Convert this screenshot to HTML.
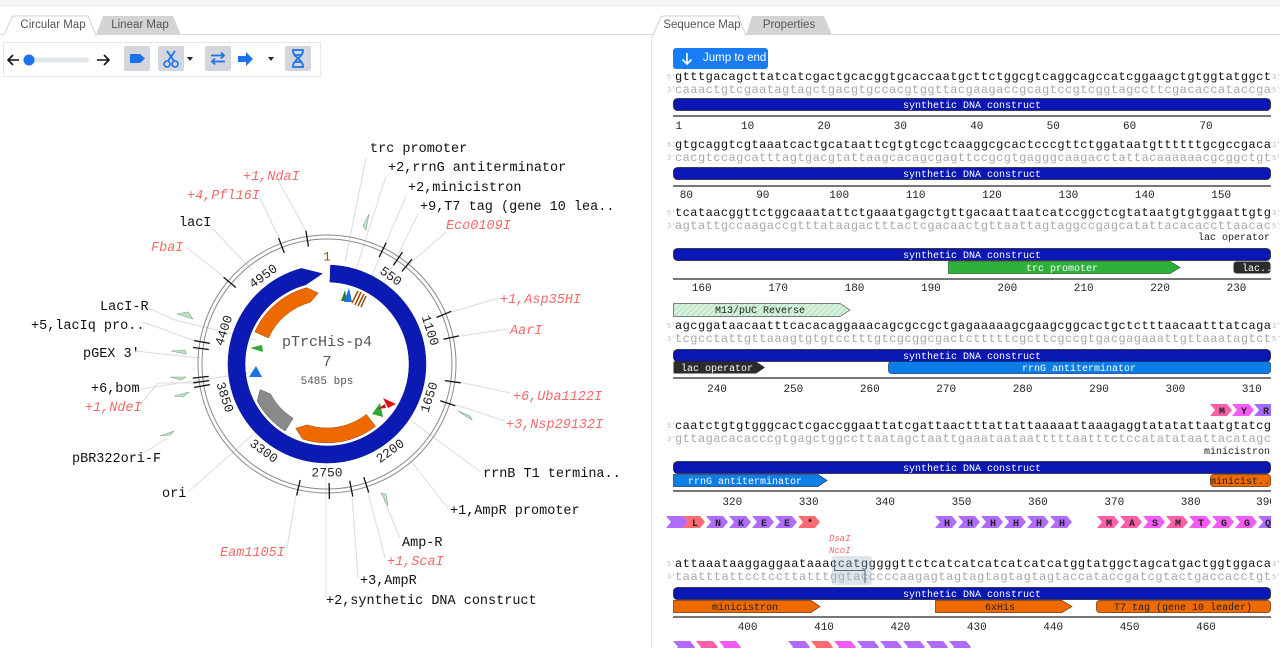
<!DOCTYPE html>
<html><head><meta charset="utf-8">
<style>
*{margin:0;padding:0;box-sizing:border-box}
body{width:1280px;height:648px;overflow:hidden;background:#fff;font-family:"Liberation Sans",sans-serif;position:relative}
.top{position:absolute;left:0;top:0;width:1280px;height:6px;background:#f4f5f7;border-bottom:1px solid #e9e9ec}
.tab{position:absolute;top:16px;height:19px;font-size:11.5px;line-height:18px;text-align:center;color:#555}
.btn{position:absolute;top:46px;width:26px;height:25px;background:#d3d6dc;border-radius:2px}
.caret{position:absolute;top:57px;width:0;height:0;border-left:3px solid transparent;border-right:3px solid transparent;border-top:4px solid #222}
svg text{font-family:"Liberation Mono",monospace}
</style></head><body>
<div class="top"></div>
<svg style="position:absolute;left:0;top:0" width="1280" height="648">
<!-- tab lines -->
<line x1="0" y1="34.5" x2="1280" y2="34.5" stroke="#d8dbe0"/>
<path d="M4 35 L12 17 Q13 16 15 16 L88 16 L96 35 Z" fill="#fff" stroke="#d0d3d8"/>
<path d="M96 35 L103 16 L173 16 L181 35 Z" fill="#d4d4d4"/>
<path d="M653 35 L661 17 Q662 16 664 16 L738 16 L746 35 Z" fill="#fff" stroke="#d0d3d8"/>
<path d="M746 35 L752 16 L824 16 L832 35 Z" fill="#d4d4d4"/>
<rect x="4" y="34" width="91" height="2" fill="#fff"/>
<rect x="654" y="34" width="91" height="2" fill="#fff"/>
<line x1="651.5" y1="35" x2="651.5" y2="648" stroke="#e3e5e8"/>
<rect x="3.5" y="42.5" width="317" height="34" fill="none" stroke="#e6e8eb"/>
</svg>
<div class="tab" style="left:14px;width:78px">Circular Map</div>
<div class="tab" style="left:104px;width:72px">Linear Map</div>
<div class="tab" style="left:662px;width:80px">Sequence Map</div>
<div class="tab" style="left:752px;width:74px">Properties</div>

<!-- toolbar -->
<svg style="position:absolute;left:0;top:42px" width="320" height="34">
<path d="M19 18 H9 M13 13 L8 18 L13 23" stroke="#111" stroke-width="1.6" fill="none"/>
<rect x="24" y="15.5" width="65" height="5" rx="2.5" fill="#e2e5ea"/>
<circle cx="29" cy="18" r="5.5" fill="#1a73e8"/>
<path d="M97 18 H109 M104 13 L109 18 L104 23" stroke="#111" stroke-width="1.6" fill="none"/>
</svg>
<div class="btn" style="left:124px"><svg width="26" height="25"><path d="M6 8 H16 L21 12.5 L16 17 H6 Z" fill="#1a73e8"/></svg></div>
<div class="btn" style="left:158px"><svg width="26" height="25"><path d="M9 5 L16 15 M17 5 L10 15" stroke="#1a73e8" stroke-width="1.8"/><circle cx="9" cy="18" r="3" fill="none" stroke="#1a73e8" stroke-width="1.6"/><circle cx="17" cy="18" r="3" fill="none" stroke="#1a73e8" stroke-width="1.6"/></svg></div>
<div class="caret" style="left:187px"></div>
<div class="btn" style="left:205px"><svg width="26" height="25"><path d="M6 9.5 H19 M16 6.5 L19 9.5 L16 12.5 M20 15.5 H7 M10 12.5 L7 15.5 L10 18.5" stroke="#1a73e8" stroke-width="1.7" fill="none"/></svg></div>
<svg style="position:absolute;left:236px;top:50px" width="24" height="18"><path d="M2 6 H10 V2 L17 9 L10 16 V12 H2 Z" fill="#1a73e8"/></svg>
<div class="caret" style="left:268px"></div>
<div class="btn" style="left:285px"><svg width="26" height="25"><path d="M7 4 H19 M7 21 H19 M8 5 C8 11 18 14 18 20 M18 5 C18 11 8 14 8 20 M10 9 H16 M10 16 H16" stroke="#1a73e8" stroke-width="1.8" fill="none"/></svg></div>

<!-- circular map -->
<svg style="position:absolute;left:0;top:0" width="650" height="648">
<g stroke="#dcdcdc" stroke-width="1" fill="none">
<path d="M366 158 L345 262"/><path d="M386 176 L356 270"/><path d="M406 196 L370 280"/><path d="M418 214 L383 285"/>
<path d="M446 232 L405 268"/><path d="M278 180 L306 231"/><path d="M259 196 L279 238"/><path d="M212 228 L252 270"/>
<path d="M186 247 L224 277"/><path d="M146 307 L175 320 L256 340"/><path d="M143 322 L198 342"/><path d="M135 351 L200 358"/>
<path d="M140 389 L255 372"/><path d="M140 405 L158 383 L200 383"/><path d="M140 455 L168 438"/><path d="M188 492 L256 432"/>
<path d="M287 548 L296 496"/><path d="M498 298 L452 312"/><path d="M508 329 L460 336"/><path d="M510 393 L459 382"/>
<path d="M505 421 L456 405"/><path d="M481 472 L410 420"/><path d="M448 508 L410 460"/><path d="M400 538 L384 500"/>
<path d="M385 558 L368 492"/><path d="M358 578 L352 496"/><path d="M326 598 L326 460"/>
</g>
<circle cx="327" cy="364" r="125" fill="none" stroke="#8a8a8a" stroke-width="1"/>
<circle cx="327" cy="364" r="129" fill="none" stroke="#8a8a8a" stroke-width="1"/>
<g stroke="#111" stroke-width="1.3">
<line x1="308.4" y1="246.5" x2="305.9" y2="230.7"/><line x1="284.3" y1="252.9" x2="278.6" y2="238"/>
<line x1="235.8" y1="287.5" x2="223.6" y2="277.2"/><line x1="209.8" y1="343.3" x2="194.1" y2="340.6"/>
<line x1="208.9" y1="349.5" x2="193" y2="347.5"/><line x1="208.7" y1="376.4" x2="192.7" y2="378.1"/>
<line x1="209.2" y1="380.6" x2="193.3" y2="382.8"/><line x1="209.8" y1="384.7" x2="194.1" y2="387.4"/>
<line x1="300.2" y1="480" x2="296.6" y2="495.5"/><line x1="379.2" y1="257" x2="386.2" y2="242.7"/>
<line x1="393.5" y1="265.3" x2="402.5" y2="252.1"/><line x1="401.9" y1="271.5" x2="412" y2="259.1"/>
<line x1="436.5" y1="317.5" x2="451.3" y2="311.3"/><line x1="443.4" y1="339.3" x2="459" y2="335.9"/>
<line x1="444.8" y1="380.6" x2="460.7" y2="382.8"/><line x1="440.2" y1="400.8" x2="455.4" y2="405.7"/>
<line x1="349.7" y1="480.8" x2="352.8" y2="496.5"/><line x1="363.8" y1="477.2" x2="368.7" y2="492.4"/>
<line x1="329.1" y1="483" x2="329.4" y2="499"/>
</g>
<g font-family="Liberation Sans" font-size="13" fill="#222" text-anchor="middle" dominant-baseline="middle" style="font-family:'Liberation Sans',sans-serif">
<text x="327" y="257" fill="#8a5a00">1</text>
<text x="390.5" y="276.6" transform="rotate(36 390.5 276.6)">550</text>
<text x="429.7" y="330.6" transform="rotate(72 429.7 330.6)">1100</text>
<text x="429.7" y="397.4" transform="rotate(-72 429.7 397.4)">1650</text>
<text x="390.5" y="451.4" transform="rotate(-36 390.5 451.4)">2200</text>
<text x="327" y="473">2750</text>
<text x="263.5" y="451.4" transform="rotate(36 263.5 451.4)">3300</text>
<text x="224.3" y="397.4" transform="rotate(72 224.3 397.4)">3850</text>
<text x="224.3" y="330.6" transform="rotate(-72 224.3 330.6)">4400</text>
<text x="263.5" y="276.6" transform="rotate(-36 263.5 276.6)">4950</text>
</g>
<path d="M330.5 265.1 A99 99 0 1 1 301.4 268.4 L322.3 273.6 L305.8 284.8 A82 82 0 1 0 329.9 282.05 Z" fill="#0b1ab3" stroke="#0a1490" stroke-width="0.5"/>
<path d="M254.8 331.9 A79 79 0 0 1 306.6 287.7 L318.3 293 L310.4 302.2 A64 64 0 0 0 268.5 338 Z" fill="#ee6a00" stroke="#a04800" stroke-width="0.5"/>
<path d="M375.6 426.3 A79 79 0 0 1 302.6 439.1 L295.7 428.3 L307.2 424.9 A64 64 0 0 0 366.4 414.4 Z" fill="#ee6a00" stroke="#a04800" stroke-width="0.5"/>
<path d="M285.1 431 A79 79 0 0 1 257.2 401.1 L260.2 389.6 L270.5 394 A64 64 0 0 0 293.1 418.3 Z" fill="#8a8a8a" stroke="#555" stroke-width="0.5"/>
<path d="M250 348 L262 345 L263 352 Z" fill="#2fa83a"/>
<path d="M249 377 L256 366 L262 377 Z" fill="#1a73e8"/>
<path d="M383 398 L396 404 L388 408 Z" fill="#e01010"/>
<path d="M372 414 L380 403 L383 417 Z" fill="#2fa83a"/>
<path d="M377 409 L385 404 L386 408 Z" fill="#c02020"/>
<path d="M341 301 L345 290 L347 301 Z" fill="#2e7d32"/>
<path d="M344 302 L349 288 L352 302 Z" fill="#1a73e8"/>
<path d="M352 303 L358 291 M355 305 L361 292 M358 306 L364 294 M361 307 L366 296" stroke="#9a4a00" stroke-width="1.5"/>
<g fill="#bfe2c7" stroke="#7aa888" stroke-width="0.6">
<path d="M363 226 L369 214 L366 230 Z"/><path d="M177 314 L188 312 L193 319 Z"/><path d="M171 351 L185 350 L186 354 Z"/>
<path d="M170 377 L186 377 L181 380 Z"/><path d="M174 396 L189 392 L183 397 Z"/><path d="M160 436 L174 431 L170 435 Z"/>
<path d="M458 411 L470 416 L472 420 Z"/><path d="M381 493 L388 506 L386 494 Z"/>
</g>
<g font-size="13" style="font-family:'Liberation Sans',sans-serif" text-anchor="middle" fill="#555">
<text x="327" y="346" font-size="15">pTrcHis-p4</text>
<text x="327" y="366" font-size="15">7</text>
<text x="327" y="384" font-size="11">5485 bps</text>
</g>
<g font-size="13.5" fill="#111" style="font-family:'Liberation Mono',monospace">
<text x="370" y="152">trc promoter</text>
<text x="388" y="171">+2,rrnG antiterminator</text>
<text x="408" y="191">+2,minicistron</text>
<text x="420" y="210">+9,T7 tag (gene 10 lea..</text>
<text x="179" y="226">lacI</text>
<text x="100" y="310">LacI-R</text>
<text x="31" y="329">+5,lacIq pro..</text>
<text x="83" y="357">pGEX 3'</text>
<text x="91" y="392">+6,bom</text>
<text x="72" y="462">pBR322ori-F</text>
<text x="162" y="497">ori</text>
<text x="483" y="477">rrnB T1 termina..</text>
<text x="450" y="514">+1,AmpR promoter</text>
<text x="402" y="546">Amp-R</text>
<text x="360" y="584">+3,AmpR</text>
<text x="326" y="604">+2,synthetic DNA construct</text>
</g>
<g font-size="13.5" fill="#f36a6a" font-style="italic" style="font-family:'Liberation Mono',monospace">
<text x="446" y="229">Eco0109I</text>
<text x="243" y="180">+1,NdaI</text>
<text x="187" y="199">+4,Pfl16I</text>
<text x="151" y="251">FbaI</text>
<text x="85" y="411">+1,NdeI</text>
<text x="220" y="556">Eam1105I</text>
<text x="500" y="303">+1,Asp35HI</text>
<text x="510" y="334">AarI</text>
<text x="513" y="400">+6,Uba1122I</text>
<text x="506" y="428">+3,Nsp29132I</text>
<text x="387" y="565">+1,ScaI</text>
</g>
</svg>

<!-- sequence map -->
<div style="position:absolute;left:673px;top:48px;width:95px;height:21px;background:#1a7cf5;border-radius:3px;color:#fff;font-size:11.5px;line-height:21px;padding-left:30px">Jump to end</div>
<svg style="position:absolute;left:680px;top:52px" width="14" height="14"><path d="M7 1 V12 M2.5 7.5 L7 12 L11.5 7.5" stroke="#fff" stroke-width="1.6" fill="none"/></svg>

<svg style="position:absolute;left:0;top:0" width="1280" height="648">
<defs>
<polygon id="ch" points="0,0 17,0 22,6 17,12 0,12 5,6"/>
<pattern id="hat" width="4" height="4" patternUnits="userSpaceOnUse" patternTransform="rotate(45)"><rect width="4" height="4" fill="#d6f2dc"/><line x1="0" y1="0" x2="0" y2="4" stroke="#a8d8b2" stroke-width="1.5"/></pattern>
</defs>
<g font-size="12" fill="#111">
<text x="675" y="80" textLength="596" lengthAdjust="spacing">gtttgacagcttatcatcgactgcacggtgcaccaatgcttctggcgtcaggcagccatcggaagctgtggtatggct</text>
<text x="675" y="148" textLength="596" lengthAdjust="spacing">gtgcaggtcgtaaatcactgcataattcgtgtcgctcaaggcgcactcccgttctggataatgttttttgcgccgaca</text>
<text x="675" y="216" textLength="596" lengthAdjust="spacing">tcataacggttctggcaaatattctgaaatgagctgttgacaattaatcatccggctcgtataatgtgtggaattgtg</text>
<text x="675" y="329" textLength="596" lengthAdjust="spacing">agcggataacaatttcacacaggaaacagcgccgctgagaaaaagcgaagcggcactgctctttaacaatttatcaga</text>
<text x="675" y="429" textLength="596" lengthAdjust="spacing">caatctgtgtgggcactcgaccggaattatcgattaactttattattaaaaattaaagaggtatatattaatgtatcg</text>
<text x="675" y="567" textLength="596" lengthAdjust="spacing">attaaataaggaggaataaaccatgggggttctcatcatcatcatcatcatggtatggctagcatgactggtggaca</text>
</g>
<g font-size="12" fill="#a8a8a8">
<text x="675" y="93" textLength="596" lengthAdjust="spacing">caaactgtcgaatagtagctgacgtgccacgtggttacgaagaccgcagtccgtcggtagccttcgacaccataccga</text>
<text x="675" y="161" textLength="596" lengthAdjust="spacing">cacgtccagcatttagtgacgtattaagcacagcgagttccgcgtgagggcaagacctattacaaaaaacgcggctgt</text>
<text x="675" y="229" textLength="596" lengthAdjust="spacing">agtattgccaagaccgtttataagactttactcgacaactgttaattagtaggccgagcatattacacaccttaacac</text>
<text x="675" y="342" textLength="596" lengthAdjust="spacing">tcgcctattgttaaagtgtgtcctttgtcgcggcgactctttttcgcttcgccgtgacgagaaattgttaaatagtct</text>
<text x="675" y="442" textLength="596" lengthAdjust="spacing">gttagacacacccgtgagctggccttaatagctaattgaaataataatttttaatttctccatatataattacatagc</text>
<text x="675" y="580" textLength="596" lengthAdjust="spacing">taatttattcctccttatttggtacccccaagagtagtagtagtagtagtaccataccgatcgtactgaccacctgt</text>
</g>
<rect x="832" y="556" width="40" height="29" rx="3" fill="#9fb3c8" opacity="0.35"/>
<path d="M834.5 560 V570.5 H865 V583" stroke="#666" fill="none"/>
<g font-size="7" fill="#bbb">
<text x="667" y="79">5'</text><text x="667" y="92">3'</text><text x="1272" y="79">3'</text><text x="1272" y="92">5'</text>
<text x="667" y="147">5'</text><text x="667" y="160">3'</text><text x="1272" y="147">3'</text><text x="1272" y="160">5'</text>
<text x="667" y="215">5'</text><text x="667" y="228">3'</text><text x="1272" y="215">3'</text><text x="1272" y="228">5'</text>
<text x="667" y="328">5'</text><text x="667" y="341">3'</text><text x="1272" y="328">3'</text><text x="1272" y="341">5'</text>
<text x="667" y="428">5'</text><text x="667" y="441">3'</text><text x="1272" y="428">3'</text><text x="1272" y="441">5'</text>
<text x="667" y="566">5'</text><text x="667" y="579">3'</text><text x="1272" y="566">3'</text><text x="1272" y="579">5'</text>
</g>
<!-- synthetic bars -->
<g fill="#0b17b5" stroke="#222" stroke-width="0.8">
<rect x="673.5" y="98.5" width="597" height="12" rx="4"/>
<rect x="673.5" y="167.5" width="597" height="12" rx="4"/>
<rect x="673.5" y="248.5" width="597" height="12" rx="4"/>
<rect x="673.5" y="349.5" width="597" height="12" rx="4"/>
<rect x="673.5" y="461.5" width="597" height="12" rx="4"/>
<rect x="673.5" y="587.5" width="597" height="12" rx="4"/>
</g>
<g font-size="10" fill="#fff" text-anchor="middle">
<text x="972" y="108">synthetic DNA construct</text>
<text x="972" y="177">synthetic DNA construct</text>
<text x="972" y="258">synthetic DNA construct</text>
<text x="972" y="359">synthetic DNA construct</text>
<text x="972" y="471">synthetic DNA construct</text>
<text x="972" y="597">synthetic DNA construct</text>
</g>
<!-- features -->
<path d="M948.5 261.5 H1170 L1180 267.5 L1170 273.5 H948.5 Z" fill="#2db13a" stroke="#1d6a24" stroke-width="0.7"/>
<text x="1062" y="271" font-size="10" fill="#fff" text-anchor="middle">trc promoter</text>
<rect x="1233.5" y="261.5" width="37" height="12" rx="3" fill="#2b2b2b"/>
<text x="1242" y="271" font-size="10" fill="#fff">lac..</text>
<path d="M673.5 303.5 H840 L850 310 L840 316.5 H673.5 Z" fill="url(#hat)" stroke="#555" stroke-width="0.7"/>
<text x="760" y="313" font-size="10" fill="#222" text-anchor="middle">M13/pUC Reverse</text>
<path d="M673.5 361.5 H756 L765 367.5 L756 373.5 H673.5 Z" fill="#2b2b2b"/>
<text x="717" y="371" font-size="10" fill="#fff" text-anchor="middle">lac operator</text>
<rect x="888.5" y="361.5" width="382" height="12" rx="3" fill="#0b7de9" stroke="#1a3a6a" stroke-width="0.7"/>
<text x="1079" y="371" font-size="10" fill="#fff" text-anchor="middle">rrnG antiterminator</text>
<text x="1270" y="240" font-size="10" fill="#222" text-anchor="end">lac operator</text>
<text x="1270" y="454" font-size="10" fill="#222" text-anchor="end">minicistron</text>
<path d="M673.5 474.5 H818 L827 480.5 L818 486.5 H673.5 Z" fill="#0b7de9" stroke="#1a3a6a" stroke-width="0.7"/>
<text x="745" y="484" font-size="10" fill="#fff" text-anchor="middle">rrnG antiterminator</text>
<rect x="1210.5" y="474.5" width="60" height="12" rx="3" fill="#ee6a00" stroke="#6a3000" stroke-width="0.7"/>
<text x="1240" y="484" font-size="10" fill="#222" text-anchor="middle">minicist..</text>
<path d="M673.5 600.5 H811 L820 606.5 L811 612.5 H673.5 Z" fill="#ee6a00" stroke="#6a3000" stroke-width="0.7"/>
<text x="745" y="610" font-size="10" fill="#222" text-anchor="middle">minicistron</text>
<path d="M935.5 600.5 H1062 L1072 606.5 L1062 612.5 H935.5 Z" fill="#ee6a00" stroke="#6a3000" stroke-width="0.7"/>
<text x="1000" y="610" font-size="10" fill="#222" text-anchor="middle">6xHis</text>
<rect x="1096.5" y="600.5" width="174" height="12" rx="3" fill="#ee6a00" stroke="#6a3000" stroke-width="0.7"/>
<text x="1183" y="610" font-size="10" fill="#222" text-anchor="middle">T7 tag (gene 10 leader)</text>
<g font-size="9" fill="#f36a6a" font-style="italic"><text x="829" y="541">DsaI</text><text x="829" y="553">NcoI</text></g>
<!-- rulers -->
<g stroke="#777" stroke-width="2">
<line x1="673" y1="116" x2="1271" y2="116"/><line x1="673" y1="186" x2="1271" y2="186"/>
<line x1="673" y1="279" x2="1271" y2="279"/><line x1="673" y1="378" x2="1271" y2="378"/>
<line x1="673" y1="491" x2="1271" y2="491"/><line x1="673" y1="617" x2="1271" y2="617"/>
</g>
<g font-size="11" fill="#222" text-anchor="middle">
<text x="678.8" y="129">1</text><text x="747.6" y="129">10</text><text x="824" y="129">20</text><text x="900.4" y="129">30</text><text x="976.8" y="129">40</text><text x="1053.2" y="129">50</text><text x="1129.6" y="129">60</text><text x="1206" y="129">70</text>
<text x="686.4" y="198">80</text><text x="762.8" y="198">90</text><text x="839.2" y="198">100</text><text x="915.6" y="198">110</text><text x="992" y="198">120</text><text x="1068.4" y="198">130</text><text x="1144.8" y="198">140</text><text x="1221.2" y="198">150</text>
<text x="701.7" y="291">160</text><text x="778.1" y="291">170</text><text x="854.5" y="291">180</text><text x="930.9" y="291">190</text><text x="1007.3" y="291">200</text><text x="1083.7" y="291">210</text><text x="1160.1" y="291">220</text><text x="1236.5" y="291">230</text>
<text x="717" y="392">240</text><text x="793.4" y="392">250</text><text x="869.8" y="392">260</text><text x="946.2" y="392">270</text><text x="1022.6" y="392">280</text><text x="1099" y="392">290</text><text x="1175.4" y="392">300</text><text x="1251.8" y="392">310</text>
<text x="732.3" y="505">320</text><text x="808.7" y="505">330</text><text x="885.1" y="505">340</text><text x="961.5" y="505">350</text><text x="1037.9" y="505">360</text><text x="1114.3" y="505">370</text><text x="1190.7" y="505">380</text><text x="1266" y="505">390</text>
<text x="747.6" y="630">400</text><text x="824" y="630">410</text><text x="900.4" y="630">420</text><text x="976.8" y="630">430</text><text x="1053.2" y="630">440</text><text x="1129.6" y="630">450</text><text x="1206" y="630">460</text>
</g>
<!-- amino acids -->
<g>
<use href="#ch" x="1210" y="404" fill="#ff5fa8"/><use href="#ch" x="1232" y="404" fill="#f25cf5"/><use href="#ch" x="1254" y="404" fill="#a46cff"/>
<use href="#ch" x="666" y="516" fill="#b06cff"/>
<use href="#ch" x="683" y="516" fill="#ff6a73"/><use href="#ch" x="706" y="516" fill="#b06cff"/><use href="#ch" x="729" y="516" fill="#b06cff"/><use href="#ch" x="752" y="516" fill="#b06cff"/><use href="#ch" x="775" y="516" fill="#b06cff"/><use href="#ch" x="798" y="516" fill="#ff6a73"/>
<use href="#ch" x="935" y="516" fill="#b06cff"/><use href="#ch" x="958" y="516" fill="#b06cff"/><use href="#ch" x="981" y="516" fill="#b06cff"/><use href="#ch" x="1004" y="516" fill="#b06cff"/><use href="#ch" x="1027" y="516" fill="#b06cff"/><use href="#ch" x="1050" y="516" fill="#b06cff"/>
<use href="#ch" x="1097" y="516" fill="#ff5fa8"/><use href="#ch" x="1120" y="516" fill="#ff5fa8"/><use href="#ch" x="1143" y="516" fill="#f25cf5"/><use href="#ch" x="1166" y="516" fill="#ff5fa8"/><use href="#ch" x="1189" y="516" fill="#f25cf5"/><use href="#ch" x="1212" y="516" fill="#f25cf5"/><use href="#ch" x="1235" y="516" fill="#f25cf5"/><use href="#ch" x="1258" y="516" fill="#b06cff"/>
<use href="#ch" x="673" y="641" fill="#b06cff"/><use href="#ch" x="696" y="641" fill="#ff5fa8"/><use href="#ch" x="719" y="641" fill="#f25cf5"/>
<use href="#ch" x="788" y="641" fill="#b06cff"/><use href="#ch" x="811" y="641" fill="#ff6a73"/><use href="#ch" x="834" y="641" fill="#f25cf5"/><use href="#ch" x="857" y="641" fill="#b06cff"/><use href="#ch" x="880" y="641" fill="#b06cff"/><use href="#ch" x="903" y="641" fill="#b06cff"/><use href="#ch" x="926" y="641" fill="#b06cff"/><use href="#ch" x="949" y="641" fill="#b06cff"/>
</g>
<rect x="1271" y="400" width="9" height="130" fill="#fff"/>
<g font-size="10" font-weight="bold" fill="#222" text-anchor="middle">
<text x="1222" y="414">M</text><text x="1244" y="414">Y</text><text x="1266" y="414">R</text>
<text x="695" y="526">L</text><text x="718" y="526">N</text><text x="741" y="526">K</text><text x="764" y="526">E</text><text x="787" y="526">E</text><text x="810" y="526">*</text>
<text x="947" y="526">H</text><text x="970" y="526">H</text><text x="993" y="526">H</text><text x="1016" y="526">H</text><text x="1039" y="526">H</text><text x="1062" y="526">H</text>
<text x="1109" y="526">M</text><text x="1132" y="526">A</text><text x="1155" y="526">S</text><text x="1178" y="526">M</text><text x="1201" y="526">T</text><text x="1224" y="526">G</text><text x="1247" y="526">G</text><text x="1268" y="526">Q</text>
</g>
</svg>
</body></html>
